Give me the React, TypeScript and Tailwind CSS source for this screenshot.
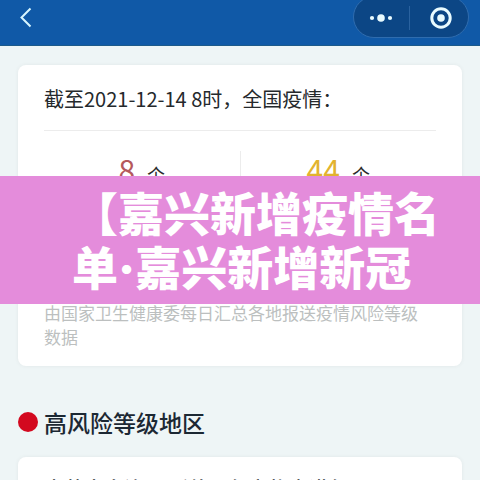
const stats = [
  { value: "8", color: "text-[#b5595c]" },
  { value: "44", color: "text-[#e2b32f]" },
];

function TopBar() {
  return (
    <header className="flex h-[46px] items-start justify-between border-b border-[#1c5a8a] bg-[#1059a7] pr-[11px] pl-3">
      <button type="button" aria-label="返回" className="mt-1 text-[#d8f6ff]">
        <svg width="28" height="28" viewBox="0 0 28 28" fill="none" stroke="currentColor" strokeWidth="2">
          <path d="M18.5 4.5 9.5 13.5l9 9" />
        </svg>
      </button>
      <div className="-mt-1 flex h-[42px] w-[116px] items-center rounded-full border border-[#2f6cae] bg-[#0c4685] pt-0.5 text-[#e9fbff]">
        <button type="button" aria-label="更多" className="flex flex-1 justify-center">
          <svg width="24" height="10" viewBox="0 0 24 10" fill="currentColor">
            <circle cx="3" cy="5" r="2.1" />
            <circle cx="12" cy="5" r="3.8" />
            <circle cx="21" cy="5" r="2.1" />
          </svg>
        </button>
        <span className="h-6 w-px bg-[#2a629f]" />
        <button type="button" aria-label="关闭" className="flex flex-1 justify-center pl-1">
          <svg width="24" height="24" viewBox="0 0 24 24" fill="none">
            <circle cx="12" cy="12" r="9.2" stroke="currentColor" strokeWidth="3" />
            <circle cx="12" cy="12" r="3.8" fill="currentColor" />
          </svg>
        </button>
      </div>
    </header>
  );
}

function SummaryCard() {
  return (
    <section className="rounded-lg bg-white px-[26px] pt-[18px] pb-[17px] shadow-[0_0_4px_rgba(0,0,0,0.06)]">
      <h1 className="border-b border-[#ececec] pb-[15px] text-xl leading-8 text-[#25292c]">
        截至2021-12-14 8时，全国疫情：
      </h1>
      <div className="mt-5 flex h-[150px] divide-x divide-[#ececec]">
        {stats.map((s) => (
          <p key={s.value} className="flex flex-1 items-baseline justify-center gap-3 text-lg leading-9 text-[#2b2b2b]">
            <span className={`text-3xl leading-9 ${s.color}`}>{s.value}</span>个
          </p>
        ))}
      </div>
      <p className="pr-3 text-[17px] leading-6 text-[#bcbfbf]">
        由国家卫生健康委每日汇总各地报送疫情风险等级数据
      </p>
    </section>
  );
}

export default function App() {
  return (
    <main className="relative h-screen overflow-hidden bg-[#eef5f6] font-['Noto_Sans_CJK_SC',sans-serif]">
      <TopBar />
      <div className="px-[18px] pt-[19px]">
        <SummaryCard />
        <h2 className="flex items-center gap-[6px] pt-10 pb-[19px] text-[23px] leading-8 font-medium text-[#1c2833]">
          <span className="size-5 rounded-full bg-[#d3091f]" />
          高风险等级地区
        </h2>
        <section className="rounded-lg bg-white px-[26px] pt-4 shadow-[0_0_4px_rgba(0,0,0,0.06)]">
          <h3 className="text-xl leading-8 font-medium whitespace-nowrap text-[#25292c]">
            内蒙古自治区 呼伦贝尔市扎赉诺尔区
          </h3>
        </section>
      </div>
      <div className="absolute inset-x-0 top-44 bg-[#e48cdb] pt-2 pb-3 pl-[72px] text-[46px] leading-[54px] font-black whitespace-nowrap text-white">
        <p>【嘉兴新增疫情名</p>
        <p>
          单<span className="font-['Inter',sans-serif] leading-none">·</span>嘉兴新增新冠
        </p>
      </div>
    </main>
  );
}
